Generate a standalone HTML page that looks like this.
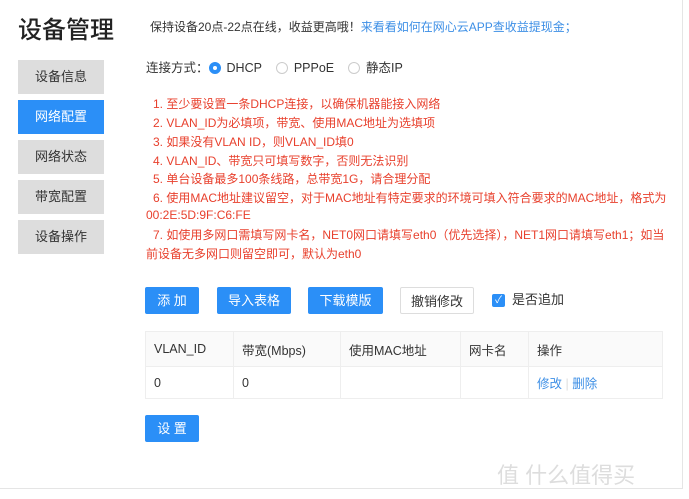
<html><head><style>
body{margin:0;width:689px;height:499px;background:#fff;font-family:"Liberation Sans","Noto Sans CJK SC",sans-serif;position:relative;overflow:hidden;color:#333}
.a{position:absolute;white-space:nowrap}
.nav{position:absolute;left:18px;width:86px;height:34px;background:#ddd;color:#333;font-size:13px;text-align:center;line-height:34px}
.btn{position:absolute;top:287px;height:27px;line-height:27px;background:#2b8ff7;color:#fff;font-size:13px;text-align:center;border-radius:2px}
.red{position:absolute;left:153px;color:#e8402d;font-size:12px;white-space:nowrap}
.rad{display:inline-block;width:12px;height:12px;border:1px solid #ccc;border-radius:50%;vertical-align:-2px;margin-right:6px;box-sizing:border-box}
td{border:1px solid #eee;padding:0 8px;font-size:12.5px}
</style></head><body>
<div class="a" style="left:18px;top:10px;font-size:24px;color:#222;font-weight:500">设备管理</div>
<div class="a" style="left:150px;top:18px;font-size:12px;color:#333">保持设备20点-22点在线，收益更高哦！<span style="color:#3d8fe6">来看看如何在网心云APP查收益提现金；</span></div>
<div class="nav" style="top:60px">设备信息</div>
<div class="nav" style="top:100px;background:#2b8ff7;color:#fff">网络配置</div>
<div class="nav" style="top:140px">网络状态</div>
<div class="nav" style="top:180px">带宽配置</div>
<div class="nav" style="top:220px">设备操作</div>
<div class="a" style="left:146px;top:57px;font-size:12.5px">连接方式：<span class="rad" style="border:4px solid #2b8ff7"></span>DHCP&nbsp;&nbsp;&nbsp;&nbsp;<span class="rad"></span>PPPoE&nbsp;&nbsp;&nbsp;&nbsp;<span class="rad"></span>静态IP</div>
<div class="red" style="top:95px">1. 至少要设置一条DHCP连接，以确保机器能接入网络</div>
<div class="red" style="top:114px">2. VLAN_ID为必填项，带宽、使用MAC地址为选填项</div>
<div class="red" style="top:133px">3. 如果没有VLAN ID，则VLAN_ID填0</div>
<div class="red" style="top:152px">4. VLAN_ID、带宽只可填写数字，否则无法识别</div>
<div class="red" style="top:170px">5. 单台设备最多100条线路，总带宽1G，请合理分配</div>
<div class="red" style="top:189px">6. 使用MAC地址建议留空，对于MAC地址有特定要求的环境可填入符合要求的MAC地址，格式为</div>
<div class="red" style="top:208px;left:146px">00:2E:5D:9F:C6:FE</div>
<div class="red" style="top:226px">7. 如使用多网口需填写网卡名，NET0网口请填写eth0（优先选择），NET1网口请填写eth1；如当</div>
<div class="red" style="top:245px;left:146px">前设备无多网口则留空即可，默认为eth0</div>
<div class="btn" style="left:145px;width:54px">添 加</div>
<div class="btn" style="left:217px;width:74px">导入表格</div>
<div class="btn" style="left:308px;width:75px">下载模版</div>
<div class="btn" style="left:400px;width:74px;background:#fff;color:#333;border:1px solid #ddd;box-sizing:border-box">撤销修改</div>
<div class="a" style="left:492px;top:294px;width:13px;height:13px;background:#2b8ff7;border-radius:2px;color:#fff;font-size:10px;line-height:13px;text-align:center">✓</div>
<div class="a" style="left:512px;top:292px;font-size:13px;line-height:16px">是否追加</div>
<table style="position:absolute;left:145px;top:331px;width:518px;border-collapse:collapse;table-layout:fixed">
<tr style="height:35px;background:#fafafa"><td style="width:71px">VLAN_ID</td><td style="width:90px">带宽(Mbps)</td><td style="width:103px">使用MAC地址</td><td style="width:51px">网卡名</td><td>操作</td></tr>
<tr style="height:32px"><td>0</td><td>0</td><td></td><td></td><td style="color:#3d8fe6">修改 <span style="color:#ddd">|</span> 删除</td></tr>
</table>
<div class="btn" style="left:145px;width:54px;top:415px">设 置</div>
<div class="a" style="left:682px;top:0;width:1px;height:488px;background:#e5e5e5"></div>
<div class="a" style="left:0;top:488px;width:683px;height:1px;background:#e5e5e5"></div>
<div class="a" style="left:497px;top:458px;font-size:22px;color:#ddd">值 什么值得买</div>
</body></html>
